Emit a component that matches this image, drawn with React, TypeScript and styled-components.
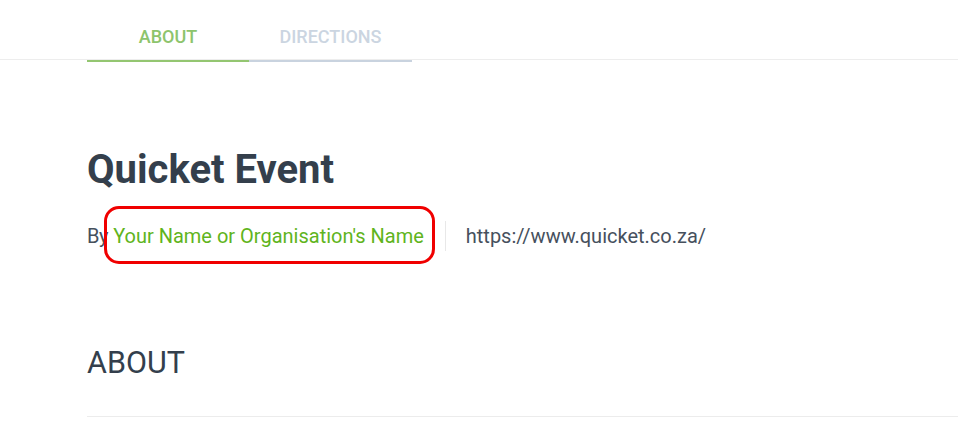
import React from 'react';
import styled, { createGlobalStyle } from 'styled-components';

const GlobalStyle = createGlobalStyle`
  html, body {
    margin: 0;
    padding: 0;
    background: #ffffff;
    font-family: Roboto, "Liberation Sans", sans-serif;
  }
`;

const Page = styled.div`
  width: 958px;
  height: 440px;
  overflow: hidden;
`;

/* Tabs */
const TabBar = styled.nav`
  position: relative;
  display: flex;
  padding-left: 87px;

  /* thin rule that runs the full width just above the tab underline */
  &::after {
    content: '';
    position: absolute;
    left: 0;
    right: 0;
    top: 59px;
    height: 1px;
    background: #ededed;
  }
`;

const Tab = styled.a<{ $active?: boolean }>`
  display: flex;
  align-items: center;
  justify-content: center;
  width: ${(p) => (p.$active ? '162px' : '163px')};
  height: 62px;
  padding-top: 13px;
  box-sizing: border-box;
  border-bottom: 2px solid ${(p) => (p.$active ? '#94c671' : '#c9d3df')};
  color: ${(p) => (p.$active ? '#8dc46c' : '#cbd5e1')};
  font-size: 18px;
  font-weight: 500;
  text-transform: uppercase;
  text-decoration: none;
  cursor: pointer;
`;

/* Event header */
const Content = styled.main`
  padding: 84px 0 0 87px;
`;

const Title = styled.h1`
  margin: 0;
  font-size: 40px;
  font-weight: 700;
  line-height: 48px;
  color: #343f4c;
`;

const MetaRow = styled.div`
  display: flex;
  align-items: center;
  margin-top: 27px;
  font-size: 20px;
  line-height: 28px;
  color: #46505d;
`;

const Organiser = styled.span`
  letter-spacing: -0.4px;
`;

const OrganiserLink = styled.a`
  position: relative;
  margin-left: 5px;
  color: #5fb420;
  text-decoration: none;

  /* red annotation drawn around the organiser name */
  &::after {
    content: '';
    position: absolute;
    left: -9px;
    right: -11px;
    top: -16px;
    bottom: -14px;
    border: 3px solid #f00000;
    border-radius: 15px;
    pointer-events: none;
  }
`;

const Divider = styled.span`
  width: 1px;
  height: 30px;
  margin: 0 20px 0 21px;
  background: #e8e8e8;
`;

const Website = styled.a`
  color: #46505d;
  text-decoration: none;
`;

const Section = styled.section`
  margin-top: 94px;
  padding-bottom: 35px;
  border-bottom: 1px solid #ececec;
`;

const SectionTitle = styled.h2`
  margin: 0;
  font-size: 30.5px;
  font-weight: 400;
  line-height: 36px;
  color: #343f4c;
  text-transform: uppercase;
`;

export default function App() {
  return (
    <Page>
      <GlobalStyle />
      <TabBar>
        <Tab $active>About</Tab>
        <Tab>Directions</Tab>
      </TabBar>
      <Content>
        <Title>Quicket Event</Title>
        <MetaRow>
          <Organiser>By</Organiser>
          <OrganiserLink>Your Name or Organisation's Name</OrganiserLink>
          <Divider />
          <Website>https://www.quicket.co.za/</Website>
        </MetaRow>
        <Section>
          <SectionTitle>About</SectionTitle>
        </Section>
      </Content>
    </Page>
  );
}
